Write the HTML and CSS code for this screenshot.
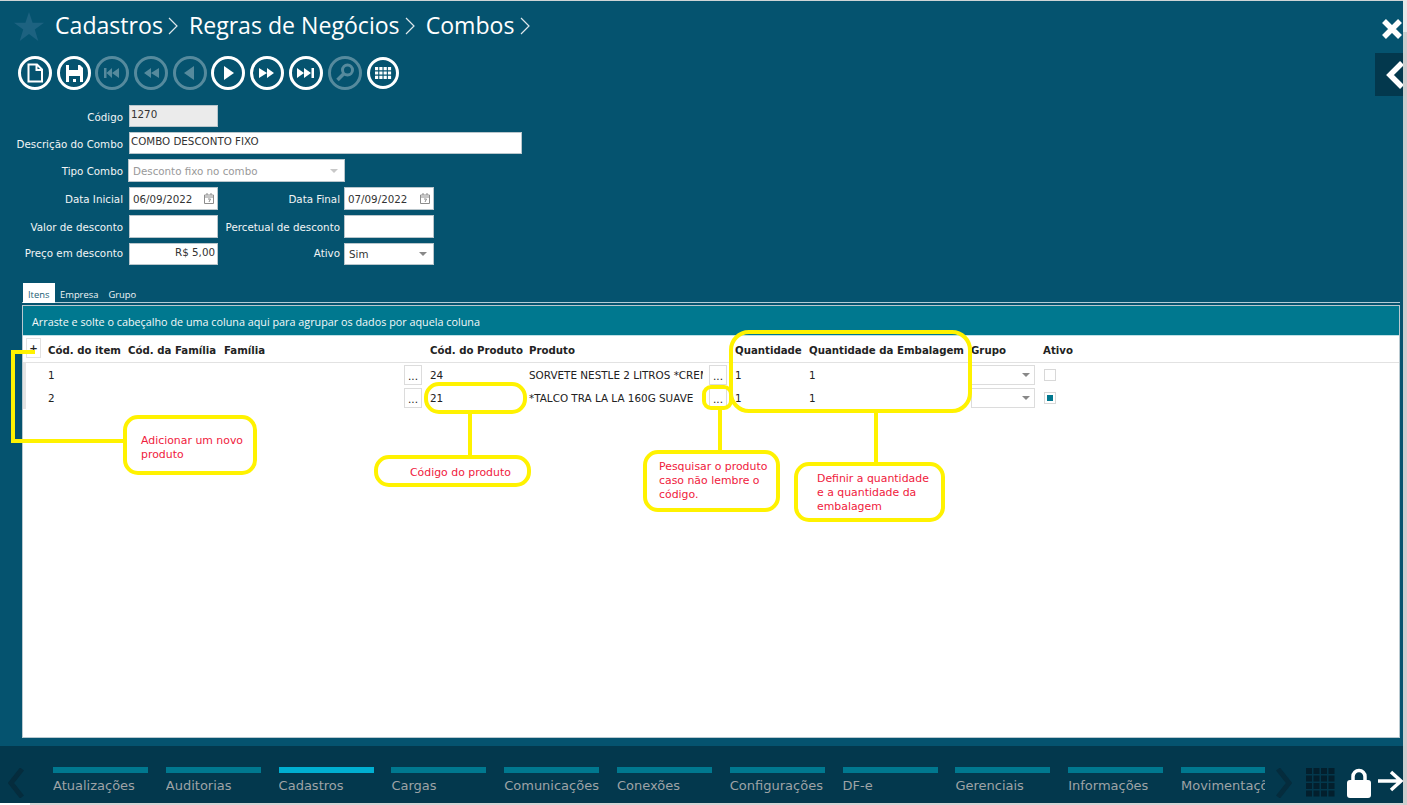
FILE: index.html
```html
<!DOCTYPE html>
<html lang="pt-BR">
<head>
<meta charset="utf-8">
<title>Combos</title>
<link rel="stylesheet" href="styles.css">
</head>
<body>
<div class="app">
  <div class="main">
    <div class="content">
      <header class="crumbs">
        <svg class="star" viewBox="0 0 30 30"><path d="M15 0l3.600 10.800H30l-9.200 6.800L24.300 29 15 22l-9.300 7 3.500-11.400L0 10.800h11.400z"/></svg>
        <span class="crumb">Cadastros</span><svg class="sep" viewBox="0 0 10 20"><path d="M1 2l8 8-8 8"/></svg>
        <span class="crumb">Regras de Negócios</span><svg class="sep" viewBox="0 0 10 20"><path d="M1 2l8 8-8 8"/></svg>
        <span class="crumb">Combos</span><svg class="sep" viewBox="0 0 10 20"><path d="M1 2l8 8-8 8"/></svg>
      </header>
      <div class="side-actions">
        <svg class="close" viewBox="0 0 22 22"><path d="M3 3l16 16M19 3L3 19"/></svg>
        <div class="back"><svg viewBox="0 0 20 30"><path d="M17 3L5 15l12 12"/></svg></div>
      </div>
      <nav class="toolbar">
        <svg class="tool" viewBox="0 0 34 34"><circle cx="17" cy="17" r="15.500"/><path class="line" d="M10.500 8.500h8.500l5 5v12h-13.500zM18.500 8.500v5.500h5.500"/></svg>
        <svg class="tool" viewBox="0 0 34 34"><circle cx="17" cy="17" r="15.500"/><path class="fill" d="M9 9h14l3 3v14H9z"/><path class="hole" d="M12 9h9v5h-9zM12 20h11v6h-11z"/><path class="fill" d="M16 23h3v3h-3z"/></svg>
        <svg class="tool off" viewBox="0 0 34 34"><circle cx="17" cy="17" r="15.500"/><path class="fill" d="M9 12h2.500v10H9zM17 12v10l-5.500-5zM24 12v10l-7-5z"/></svg>
        <svg class="tool off" viewBox="0 0 34 34"><circle cx="17" cy="17" r="15.500"/><path class="fill" d="M17 12v10l-7-5zM25 12v10l-8-5z"/></svg>
        <svg class="tool off" viewBox="0 0 34 34"><circle cx="17" cy="17" r="15.500"/><path class="fill" d="M21 10v14l-10-7z"/></svg>
        <svg class="tool" viewBox="0 0 34 34"><circle cx="17" cy="17" r="15.500"/><path class="fill" d="M13 10v14l10-7z"/></svg>
        <svg class="tool" viewBox="0 0 34 34"><circle cx="17" cy="17" r="15.500"/><path class="fill" d="M9 12v10l8-5zM17 12v10l7-5z"/></svg>
        <svg class="tool" viewBox="0 0 34 34"><circle cx="17" cy="17" r="15.500"/><path class="fill" d="M8 12v10l7-5zM15 12v10l7-5zM22.500 12H25v10h-2.500z"/></svg>
        <svg class="tool off" viewBox="0 0 34 34"><circle cx="17" cy="17" r="15.500"/><circle class="ring" cx="19.500" cy="14" r="5"/><path class="line thick" d="M15.500 18l-6 6"/></svg>
        <svg class="tool" viewBox="0 0 34 34"><circle cx="17" cy="17" r="14.500"/><path class="fill" d="M9 11h3.200v3.200H9zM13.300 11h3.200v3.200h-3.200zM17.600 11h3.200v3.200h-3.200zM21.900 11h3.200v3.200h-3.200zM9 15.400h3.200v3.200H9zM13.300 15.400h3.200v3.200h-3.200zM17.600 15.400h3.200v3.200h-3.200zM21.900 15.400h3.200v3.200h-3.200zM9 19.800h3.200V23H9zM13.300 19.800h3.200V23h-3.200zM17.600 19.800h3.200V23h-3.200zM21.900 19.800h3.200V23h-3.200z"/></svg>
      </nav>
      <form class="form">
        <label class="lbl">Código</label>
        <div class="input ro top">1270</div>
        <span></span><span></span>

        <label class="lbl">Descrição do Combo</label>
        <div class="input wide top">COMBO DESCONTO FIXO</div>

        <label class="lbl">Tipo Combo</label>
        <div class="input type">Desconto fixo no combo<i class="caret pale"></i></div>

        <label class="lbl">Data Inicial</label>
        <div class="input date">06/09/2022<svg class="cal" viewBox="0 0 10 11"><path d="M.5 2h9v8.500h-9zM.5 4h9M3 0v2M7 0v2M4 6h2.500L5 9"/></svg></div>
        <label class="lbl">Data Final</label>
        <div class="input date alt">07/09/2022<svg class="cal" viewBox="0 0 10 11"><path d="M.5 2h9v8.500h-9zM.5 4h9M3 0v2M7 0v2M4 6h2.500L5 9"/></svg></div>

        <label class="lbl">Valor de desconto</label>
        <div class="input"></div>
        <label class="lbl">Percetual de desconto</label>
        <div class="input alt"></div>

        <label class="lbl raised">Preço em desconto</label>
        <div class="input money top">R$ 5,00</div>
        <label class="lbl raised">Ativo</label>
        <div class="input alt sel">Sim<i class="caret"></i></div>
      </form>
      <div class="tabs">
        <span class="tab active">Itens</span><span class="tab">Empresa</span><span class="tab">Grupo</span>
      </div>
      <section class="panel">
        <div class="group-bar">Arraste e solte o cabeçalho de uma coluna aqui para agrupar os dados por aquela coluna</div>
        <div class="grid head">
          <span class="expander"><b>+</b></span>
          <span>Cód. do item</span><span>Cód. da Família</span><span class="span2">Família</span>
          <span>Cód. do Produto</span><span class="span2">Produto</span>
          <span>Quantidade</span><span>Quantidade da Embalagem</span><span>Grupo</span><span>Ativo</span>
        </div>
        <div class="grid row">
          <span class="gutter"></span>
          <span>1</span><span></span><span></span><span class="pick">...</span>
          <span>24</span><span class="clip">SORVETE NESTLE 2 LITROS *CREME</span><span class="pick">...</span>
          <span>1</span><span>1</span><span class="dd"><i class="caret"></i></span><span class="check"></span>
        </div>
        <div class="grid row">
          <span class="gutter"></span>
          <span>2</span><span></span><span></span><span class="pick">...</span>
          <span>21</span><span class="clip">*TALCO TRA LA LA 160G SUAVE</span><span class="pick">...</span>
          <span>1</span><span>1</span><span class="dd"><i class="caret"></i></span><span class="check on"></span>
        </div>
      </section>
    </div>
    <footer class="dock">
      <svg class="dock-arrow left" viewBox="0 0 16 30"><path d="M14 1L3 15l11 14"/></svg>
      <div class="menu">
        <a class="item">Atualizações</a>
        <a class="item">Auditorias</a>
        <a class="item current">Cadastros</a>
        <a class="item">Cargas</a>
        <a class="item">Comunicações</a>
        <a class="item">Conexões</a>
        <a class="item">Configurações</a>
        <a class="item">DF-e</a>
        <a class="item">Gerenciais</a>
        <a class="item">Informações</a>
        <a class="item last">Movimentações</a>
      </div>
      <svg class="dock-arrow right" viewBox="0 0 16 30"><path d="M2 1l11 14L2 29"/></svg>
      <svg class="apps" viewBox="0 0 29 29"><path d="M0 0h6v6H0zM7.500 0h6v6h-6zM15 0h6v6h-6zM22.500 0h6v6h-6zM0 7.500h6v6H0zM7.500 7.500h6v6h-6zM15 7.500h6v6h-6zM22.500 7.500h6v6h-6zM0 15h6v6H0zM7.500 15h6v6h-6zM15 15h6v6h-6zM22.500 15h6v6h-6zM0 22.500h6v6H0zM7.500 22.500h6v6h-6zM15 22.500h6v6h-6zM22.500 22.500h6v6h-6z"/></svg>
      <svg class="lock" viewBox="0 0 24 30"><path class="shackle" d="M6 14V8.500a6 6 0 0 1 12 0V14"/><rect y="12" width="24" height="18" rx="3"/></svg>
      <svg class="exit" viewBox="0 0 25 22"><path d="M0 11h22M13 2l10 9-10 9"/></svg>
    </footer>
    <div class="baseline"></div>
  </div>
  <aside class="scrollbar"></aside>

  <div class="note-line add-v"></div>
  <div class="note-line add-t"></div>
  <div class="note-line add-b"></div>
  <div class="note-box n-add">Adicionar um novo<br>produto</div>
  <div class="note-box n-code-hi"></div>
  <div class="note-line code-v"></div>
  <div class="note-box n-code">Código do produto</div>
  <div class="note-box n-search-hi"></div>
  <div class="note-line search-v"></div>
  <div class="note-box n-search">Pesquisar o produto<br>caso não lembre o<br>código.</div>
  <div class="note-box n-qty-hi"></div>
  <div class="note-line qty-v"></div>
  <div class="note-box n-qty">Definir a quantidade<br>e a quantidade da<br>embalagem</div>
</div>
</body>
</html>
```
FILE: styles.css
```css
* { box-sizing: border-box; }
html, body { margin: 0; height: 100%; overflow: hidden; }
body { font-family: "DejaVu Sans", Verdana, sans-serif; font-size: 10px; color: #222; }
.app { position: relative; display: flex; width: 1407px; height: 805px; }
.main { flex: 1; min-width: 0; display: flex; flex-direction: column; }
.scrollbar { width: 4px; background: linear-gradient(#e8e8e8 0 32px, #cdcdcd 32px); }
.content { position: relative; flex: 1; min-height: 0; background: #05536f; border-top: 1px solid #cfd4d6; overflow: hidden; display: flex; flex-direction: column; }

.crumbs { display: flex; align-items: center; height: 31px; margin: 8px 0 0 14px; }
.star { width: 30px; height: 30px; fill: #1d6280; margin: 4px 11px 0 0; }
.crumb { font-family: "Open Sans", sans-serif; font-size: 23.100px; color: #fff; line-height: 30px; }
.sep { width: 10px; height: 20px; margin: 3px 11px 0 5px; fill: none; stroke: #dfe8ec; stroke-width: 1.200; }

.side-actions { position: absolute; top: 16px; right: 0; display: flex; flex-direction: column; align-items: flex-end; }
.close { width: 22px; height: 24px; fill: none; stroke: #fff; stroke-width: 5.500; }
.back { width: 28px; height: 43px; margin-top: 12px; background: #03384d; display: flex; align-items: center; justify-content: flex-end; overflow: hidden; }
.back svg { width: 20px; height: 30px; fill: none; stroke: #fff; stroke-width: 5.500; margin-right: -2px; }

.toolbar { display: flex; gap: 4.700px; margin: 16px 0 0 18px; }
.tool { width: 34px; height: 34px; flex: none; fill: none; stroke: #fff; stroke-width: 3; }
.tool .fill { fill: #fff; stroke: none; }
.tool .hole { fill: #05536f; stroke: none; }
.tool .line { fill: none; stroke: #fff; stroke-width: 2; }
.tool .line.thick { stroke-width: 3.500; }
.tool .ring { stroke-width: 3; }
.tool.off { opacity: .32; }

.form { display: grid; grid-template-columns: 123px 95px 122px 95px; grid-template-rows: 22px 22px 23px 23px 23px 22px; row-gap: 5px; margin-top: 15px; font-size: 10.300px; }
.lbl { color: #f2f5f6; text-align: right; align-self: center; white-space: nowrap; padding-top: 1px; }
.lbl.raised { padding: 0 0 2px; }
.input { margin-left: 6px; height: 100%; background: #fff; border: 1px solid #b9c6cc; display: flex; align-items: center; padding: 0 3px; color: #333; white-space: nowrap; position: relative; }
.input.top { align-items: flex-start; padding: 2px 1px 0; }
.input.ro { background: #ebebeb; }
.input.wide { grid-column: 2 / span 3; width: 393px; }
.input.type { grid-column: 2 / span 3; width: 217px; margin-left: 5px; color: #999; padding-left: 4px; }
.input.alt { margin-left: 4px; width: 90px; }
.form > span { display: block; }
.input.money { justify-content: flex-end; padding-right: 2px; }
.input.sel { padding-left: 4px; }
.cal { position: absolute; right: 3px; top: 5px; width: 10px; height: 11px; fill: none; stroke: #8c8c8c; stroke-width: 1; }
.caret { position: absolute; right: 6px; top: 50%; margin-top: -2px; width: 0; height: 0; border: 4px solid transparent; border-top: 4px solid #888; border-bottom: 0; }
.caret.pale { border-top-color: #c8c8c8; }

.tabs { display: flex; height: 20px; margin: 18px 3px 0 22px; font-family: "Open Sans", sans-serif; font-size: 9.400px; color: #f2f5f6; border-bottom: 1px solid #b4cdd6; }
.tab { padding: 5px 5px 0; }
.tab.active { width: 32px; margin-left: 1px; background: #fff; color: #1d5d75; height: 20px; }
.panel { flex: 1; min-height: 0; margin: 2px 3px 8px 22px; border: 1px solid #b9c9d0; background: #fff; position: relative; }
.group-bar { height: 30px; background: #00788f; color: #f4f8f9; font-family: "Open Sans", sans-serif; font-size: 10.800px; line-height: 32px; padding-left: 9px; border-bottom: 1px solid #bfe0e6; }
.grid { display: grid; grid-template-columns: 25px 80px 96px 180px 26px 99px 180px 26px 74px 162px 72px 1fr; align-items: center; }
.grid > span { white-space: nowrap; }
.head { height: 27px; padding-top: 2px; font-size: 10.200px; font-weight: 700; color: #222; border-bottom: 1px solid #e2e2e2; }
.span2 { grid-column: span 2; }
.expander { position: relative; height: 20px; }
.expander b { position: absolute; left: 3px; top: -2px; width: 15px; height: 20px; border: 1px solid #e2e2e2; text-align: center; line-height: 20px; font-weight: 700; }
.row { height: 23px; font-size: 10.400px; color: #222; }
.gutter { align-self: stretch; width: 3px; background: #e4e4e4; }
.clip { overflow: hidden; width: 174px; }
.pick { width: 18px; height: 20px; border: 1px solid #dcdcdc; text-align: center; line-height: 21px; background: #fff; }
.dd { position: relative; width: 64px; height: 20px; border: 1px solid #dcdcdc; }
.dd .caret { right: 4px; }
.check { width: 12px; height: 12px; border: 1px solid #d8d8d8; margin-left: 1px; position: relative; }
.check.on { background: #00788f; box-shadow: inset 0 0 0 2px #fff; }

.dock { flex: none; height: 57px; background: #03384d; display: flex; align-items: flex-start; position: relative; }
.baseline { flex: none; height: 2px; background: linear-gradient(90deg, #fff 30px, #d4d4d4 30px); }
.dock-arrow { width: 16px; height: 30px; flex: none; margin-top: 22px; fill: none; stroke: #052c3d; stroke-width: 5; }
.dock-arrow.left { margin-left: 8px; }
.menu { display: flex; gap: 17.800px; width: 1212px; margin: 21px 0 0 29px; overflow: hidden; font-size: 13px; color: #9ea3a6; }
.item { flex: none; width: 95px; border-top: 6px solid #00788f; padding-top: 5px; white-space: nowrap; overflow: hidden; line-height: 16px; }
.item.current { border-top-color: #00afd1; }
.item.last { width: 85px; }
.dock-arrow.right { margin-left: 11px; }
.apps { width: 29px; height: 29px; margin: 22px 0 0 14px; fill: #031f2d; flex: none; }
.lock { width: 24px; height: 30px; margin: 22px 0 0 12px; fill: #fff; flex: none; }
.lock .shackle { fill: none; stroke: #fff; stroke-width: 3.500; }
.exit { width: 25px; height: 22px; margin: 24px 0 0 7px; fill: none; stroke: #fff; stroke-width: 3.500; flex: none; }

.note-line { position: absolute; background: #fff200; }
.note-box { position: absolute; border: 4px solid #fff200; border-radius: 15px; color: #f0203c; font-size: 10.900px; line-height: 14px; white-space: nowrap; }
.add-v { left: 11px; top: 350px; width: 4px; height: 93px; }
.add-t { left: 11px; top: 350px; width: 24px; height: 4px; }
.add-b { left: 11px; top: 439px; width: 114px; height: 4px; }
.n-add { left: 123px; top: 415px; width: 134px; height: 60px; padding: 15px 0 0 14px; background: #fff; }
.n-code-hi { left: 424px; top: 382px; width: 103px; height: 32px; }
.code-v { left: 468px; top: 413px; width: 4px; height: 43px; }
.n-code { left: 374px; top: 455px; width: 157px; height: 32px; padding: 7px 0 0 32px; background: #fff; }
.n-search-hi { left: 702px; top: 385px; width: 31px; height: 25px; border-radius: 9px; }
.search-v { left: 718px; top: 409px; width: 4px; height: 42px; }
.n-search { left: 643px; top: 450px; width: 137px; height: 62px; padding: 6px 0 0 12px; background: #fff; }
.n-qty-hi { left: 729px; top: 330px; width: 243px; height: 83px; border-radius: 20px; }
.qty-v { left: 874px; top: 412px; width: 4px; height: 51px; }
.n-qty { left: 794px; top: 462px; width: 151px; height: 60px; padding: 6px 0 0 19px; background: #fff; }
```
